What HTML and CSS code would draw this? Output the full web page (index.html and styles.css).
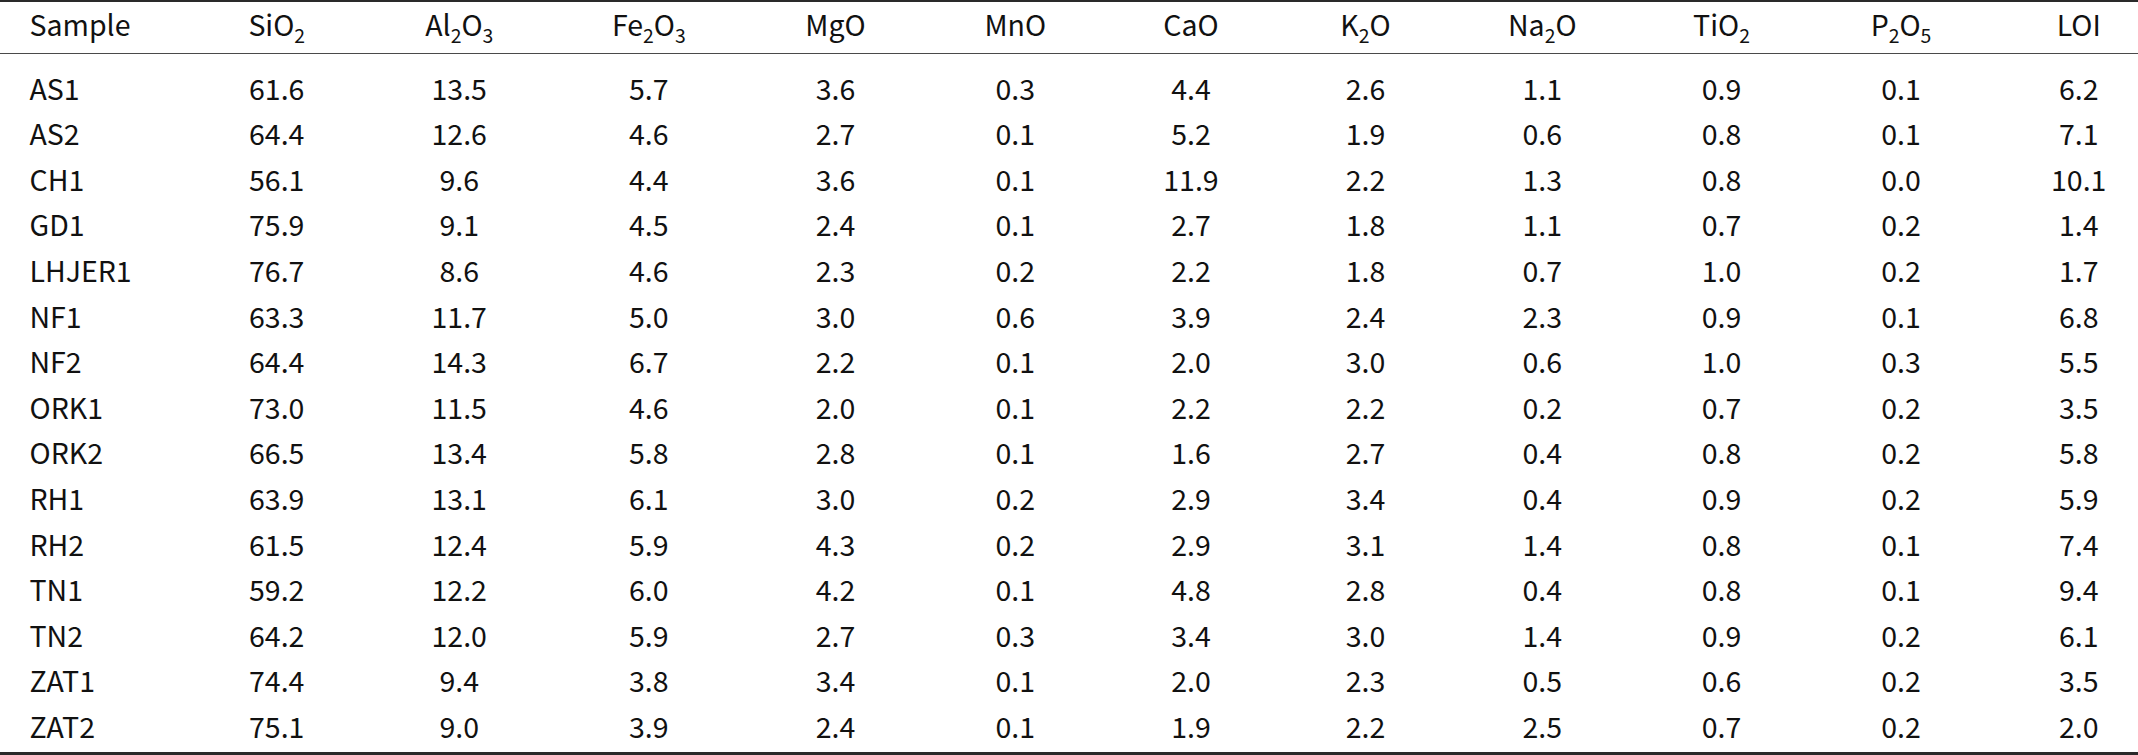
FILE: index.html
```html
<!DOCTYPE html>
<html lang="en">
<head>
<meta charset="utf-8">
<title>Major element composition</title>
<link rel="stylesheet" href="styles.css">
</head>
<body>
<table class="oxides">
  <colgroup>
    <col class="col-sample">
    <col class="col-sio2">
    <col class="col-al2o3">
    <col class="col-fe2o3">
    <col class="col-mgo">
    <col class="col-mno">
    <col class="col-cao">
    <col class="col-k2o">
    <col class="col-na2o">
    <col class="col-tio2">
    <col class="col-p2o5">
    <col class="col-loi">
  </colgroup>
  <thead>
    <tr>
      <th class="name">Sample</th>
      <th>SiO<sub>2</sub></th>
      <th>Al<sub>2</sub>O<sub>3</sub></th>
      <th>Fe<sub>2</sub>O<sub>3</sub></th>
      <th>MgO</th>
      <th>MnO</th>
      <th>CaO</th>
      <th>K<sub>2</sub>O</th>
      <th>Na<sub>2</sub>O</th>
      <th>TiO<sub>2</sub></th>
      <th>P<sub>2</sub>O<sub>5</sub></th>
      <th class="last">LOI</th>
    </tr>
  </thead>
  <tbody>
    <tr><td class="name">AS1</td><td>61.6</td><td>13.5</td><td>5.7</td><td>3.6</td><td>0.3</td><td>4.4</td><td>2.6</td><td>1.1</td><td>0.9</td><td>0.1</td><td class="last">6.2</td></tr>
    <tr><td class="name">AS2</td><td>64.4</td><td>12.6</td><td>4.6</td><td>2.7</td><td>0.1</td><td>5.2</td><td>1.9</td><td>0.6</td><td>0.8</td><td>0.1</td><td class="last">7.1</td></tr>
    <tr><td class="name">CH1</td><td>56.1</td><td>9.6</td><td>4.4</td><td>3.6</td><td>0.1</td><td>11.9</td><td>2.2</td><td>1.3</td><td>0.8</td><td>0.0</td><td class="last">10.1</td></tr>
    <tr><td class="name">GD1</td><td>75.9</td><td>9.1</td><td>4.5</td><td>2.4</td><td>0.1</td><td>2.7</td><td>1.8</td><td>1.1</td><td>0.7</td><td>0.2</td><td class="last">1.4</td></tr>
    <tr><td class="name">LHJER1</td><td>76.7</td><td>8.6</td><td>4.6</td><td>2.3</td><td>0.2</td><td>2.2</td><td>1.8</td><td>0.7</td><td>1.0</td><td>0.2</td><td class="last">1.7</td></tr>
    <tr><td class="name">NF1</td><td>63.3</td><td>11.7</td><td>5.0</td><td>3.0</td><td>0.6</td><td>3.9</td><td>2.4</td><td>2.3</td><td>0.9</td><td>0.1</td><td class="last">6.8</td></tr>
    <tr><td class="name">NF2</td><td>64.4</td><td>14.3</td><td>6.7</td><td>2.2</td><td>0.1</td><td>2.0</td><td>3.0</td><td>0.6</td><td>1.0</td><td>0.3</td><td class="last">5.5</td></tr>
    <tr><td class="name">ORK1</td><td>73.0</td><td>11.5</td><td>4.6</td><td>2.0</td><td>0.1</td><td>2.2</td><td>2.2</td><td>0.2</td><td>0.7</td><td>0.2</td><td class="last">3.5</td></tr>
    <tr><td class="name">ORK2</td><td>66.5</td><td>13.4</td><td>5.8</td><td>2.8</td><td>0.1</td><td>1.6</td><td>2.7</td><td>0.4</td><td>0.8</td><td>0.2</td><td class="last">5.8</td></tr>
    <tr><td class="name">RH1</td><td>63.9</td><td>13.1</td><td>6.1</td><td>3.0</td><td>0.2</td><td>2.9</td><td>3.4</td><td>0.4</td><td>0.9</td><td>0.2</td><td class="last">5.9</td></tr>
    <tr><td class="name">RH2</td><td>61.5</td><td>12.4</td><td>5.9</td><td>4.3</td><td>0.2</td><td>2.9</td><td>3.1</td><td>1.4</td><td>0.8</td><td>0.1</td><td class="last">7.4</td></tr>
    <tr><td class="name">TN1</td><td>59.2</td><td>12.2</td><td>6.0</td><td>4.2</td><td>0.1</td><td>4.8</td><td>2.8</td><td>0.4</td><td>0.8</td><td>0.1</td><td class="last">9.4</td></tr>
    <tr><td class="name">TN2</td><td>64.2</td><td>12.0</td><td>5.9</td><td>2.7</td><td>0.3</td><td>3.4</td><td>3.0</td><td>1.4</td><td>0.9</td><td>0.2</td><td class="last">6.1</td></tr>
    <tr><td class="name">ZAT1</td><td>74.4</td><td>9.4</td><td>3.8</td><td>3.4</td><td>0.1</td><td>2.0</td><td>2.3</td><td>0.5</td><td>0.6</td><td>0.2</td><td class="last">3.5</td></tr>
    <tr><td class="name">ZAT2</td><td>75.1</td><td>9.0</td><td>3.9</td><td>2.4</td><td>0.1</td><td>1.9</td><td>2.2</td><td>2.5</td><td>0.7</td><td>0.2</td><td class="last">2.0</td></tr>
  </tbody>
</table>
</body>
</html>
```

FILE: styles.css
```css
html, body {
  margin: 0;
  padding: 0;
  background: #ffffff;
}

body {
  font-family: "Noto Sans CJK SC", "Noto Sans", sans-serif;
  font-size: 28.5px;
  color: #111111;
}

.oxides {
  width: 2138px;
  table-layout: fixed;
  border-collapse: separate;
  border-spacing: 0;
}

.col-sample { width: 188px; }
.col-sio2   { width: 177.5px; }
.col-al2o3  { width: 187.5px; }
.col-fe2o3  { width: 191.5px; }
.col-mgo    { width: 182px; }
.col-mno    { width: 177.5px; }
.col-cao    { width: 174px; }
.col-k2o    { width: 175px; }
.col-na2o   { width: 178.5px; }
.col-tio2   { width: 180px; }
.col-p2o5   { width: 179px; }
.col-loi    { width: 147.5px; }

.oxides th,
.oxides td {
  padding: 0;
  text-align: center;
  font-weight: 400;
  white-space: nowrap;
}

.oxides th {
  line-height: 36px;
  padding-top: 3.6px;
  padding-bottom: 11.4px;
  border-top: 2px solid #2a2a2a;
  border-bottom: 1px solid #4a4a4a;
}

.oxides td {
  line-height: 45.6px;
}

.oxides tbody tr:first-child td {
  padding-top: 10.6px;
}

.oxides tbody tr:last-child td {
  padding-bottom: 3.4px;
  border-bottom: 3px solid #2a2a2a;
}

.oxides .name {
  text-align: left;
  padding-left: 29.5px;
}

.oxides .last {
  padding-left: 29px;
}

.oxides sub {
  font-size: 0.68em;
  line-height: 0;
  vertical-align: -0.36em;
}
```
